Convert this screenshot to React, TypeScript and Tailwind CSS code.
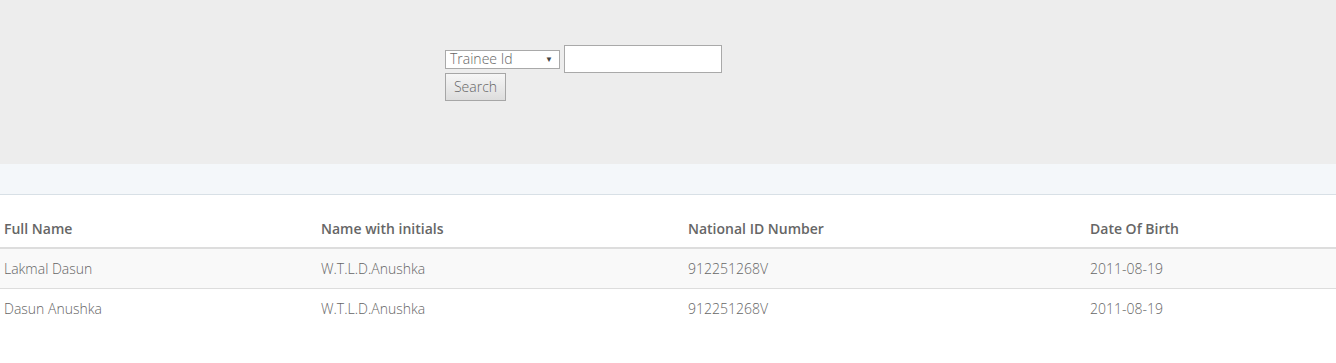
import React from "react";

const rows = [
  { full: "Lakmal Dasun", init: "W.T.L.D.Anushka", nic: "912251268V", dob: "2011-08-19" },
  { full: "Dasun Anushka", init: "W.T.L.D.Anushka", nic: "912251268V", dob: "2011-08-19" },
];

export default function App() {
  return (
    <div className="w-[1336px] h-[363px] bg-white text-[14px] text-[#666] font-light" style={{ fontFamily: "'Open Sans', Lato, sans-serif" }}>
      <div className="h-[164px] bg-[#ededed] pt-[45px] pl-[445px]">
        <div className="flex items-start gap-[4px]">
          <div className="mt-[5px] w-[115px] h-[19px] bg-white border border-[#a9a9a9] flex items-center justify-between pl-[4px] pr-[6px] pb-[2px] text-[14px] text-[#666] leading-none">
            <span>Trainee Id</span>
            <span className="text-[8px] text-[#444]">▼</span>
          </div>
          <div className="w-[158px] h-[28px] bg-white border border-[#a9a9a9]" />
        </div>
        <div className="w-[61px] h-[28px] pb-[2px] border border-[#a6a6a6] bg-gradient-to-b from-[#f6f6f6] to-[#dddddd] flex items-center justify-center text-[14px] text-[#666]">
          Search
        </div>
      </div>
      <div className="h-[31px] bg-[#f4f7fa] border-b border-[#d8e0e6]" />
      <div className="pt-[14px]">
        <div className="flex h-[40px] items-center border-b-2 border-[#dddddd] font-semibold text-[#666]">
          <div className="w-[317px] pl-[4px]">Full Name</div>
          <div className="w-[367px] pl-[4px]">Name with initials</div>
          <div className="w-[402px] pl-[4px]">National ID Number</div>
          <div className="flex-1 pl-[4px]">Date Of Birth</div>
        </div>
        {rows.map((r, i) => (
          <div key={i} className={`flex items-center ${i === 0 ? "bg-[#f9f9f9] border-b border-[#dddddd] h-[40px]" : "h-[39px]"}`}>
            <div className="w-[317px] pl-[4px]">{r.full}</div>
            <div className="w-[367px] pl-[4px]">{r.init}</div>
            <div className="w-[402px] pl-[4px]">{r.nic}</div>
            <div className="flex-1 pl-[4px]">{r.dob}</div>
          </div>
        ))}
      </div>
    </div>
  );
}
